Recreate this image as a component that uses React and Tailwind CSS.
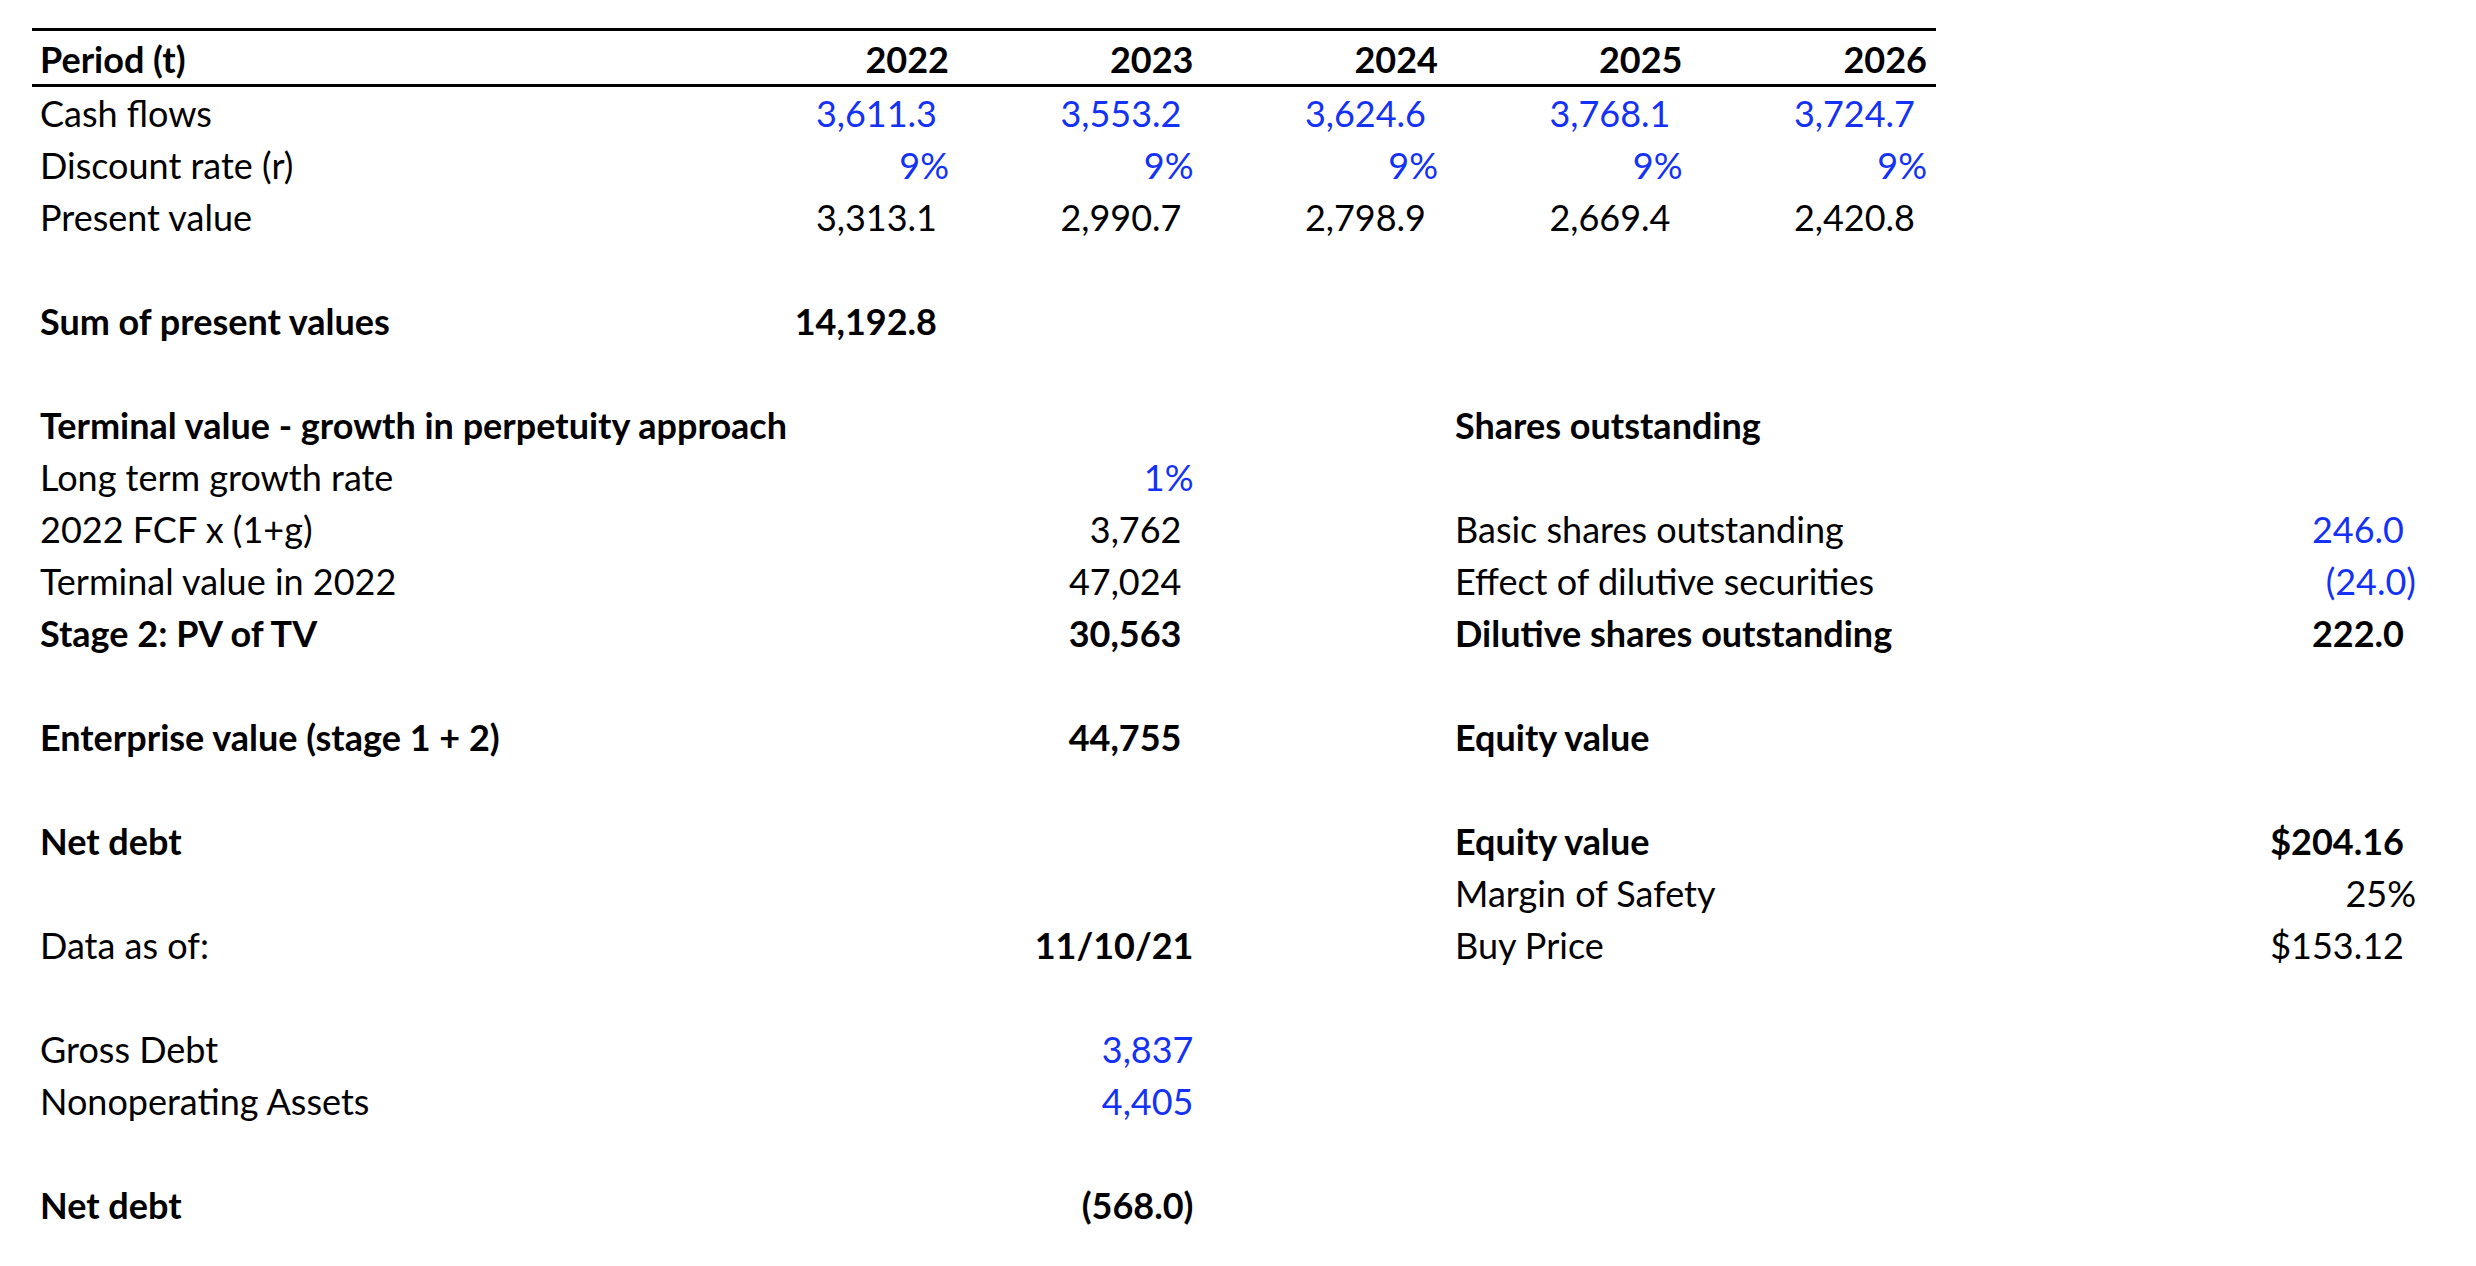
const BLUE = 'text-[#1432f5]';

// cell: [col (0..7), text, opts]  opts: b=bold, blue, pad=accounting pad for ")"
const rows = [
  [[0, 'Cash flows'], [1, '3,611.3', 'blue pad'], [2, '3,553.2', 'blue pad'], [3, '3,624.6', 'blue pad'], [4, '3,768.1', 'blue pad'], [5, '3,724.7', 'blue pad']],
  [[0, 'Discount rate (r)'], [1, '9%', 'blue'], [2, '9%', 'blue'], [3, '9%', 'blue'], [4, '9%', 'blue'], [5, '9%', 'blue']],
  [[0, 'Present value'], [1, '3,313.1', 'pad'], [2, '2,990.7', 'pad'], [3, '2,798.9', 'pad'], [4, '2,669.4', 'pad'], [5, '2,420.8', 'pad']],
  [],
  [[0, 'Sum of present values', 'b'], [1, '14,192.8', 'b pad']],
  [],
  [[0, 'Terminal value - growth in perpetuity approach', 'b'], [4, 'Shares outstanding', 'b']],
  [[0, 'Long term growth rate'], [2, '1%', 'blue']],
  [[0, '2022 FCF x (1+g)'], [2, '3,762', 'pad'], [4, 'Basic shares outstanding'], [7, '246.0', 'blue pad']],
  [[0, 'Terminal value in 2022'], [2, '47,024', 'pad'], [4, 'Effect of dilutive securities'], [7, '(24.0)', 'blue']],
  [[0, 'Stage 2: PV of TV', 'b'], [2, '30,563', 'b pad'], [4, 'Dilutive shares outstanding', 'b'], [7, '222.0', 'b pad']],
  [],
  [[0, 'Enterprise value (stage 1 + 2)', 'b'], [2, '44,755', 'b pad'], [4, 'Equity value', 'b']],
  [],
  [[0, 'Net debt', 'b'], [4, 'Equity value', 'b'], [7, '$204.16', 'b pad']],
  [[4, 'Margin of Safety'], [7, '25%']],
  [[0, 'Data as of:'], [2, '11/10/21', 'b'], [4, 'Buy Price'], [7, '$153.12', 'pad']],
  [],
  [[0, 'Gross Debt'], [2, '3,837', 'blue']],
  [[0, 'Nonoperating Assets'], [2, '4,405', 'blue']],
  [],
  [[0, 'Net debt', 'b'], [2, '(568.0)', 'b']],
];

const colStart = [
  'col-start-1',
  'col-start-2',
  'col-start-3',
  'col-start-4',
  'col-start-5',
  'col-start-6',
  'col-start-7',
  'col-start-8',
];

function Cell({ col, text, opts = '' }) {
  const flags = opts.split(' ');
  const bold = flags.includes('b');
  const blue = flags.includes('blue');
  const pad = flags.includes('pad');
  const isLabel = col === 0 || (col === 4 && !/^[\d$(]/.test(text));
  return (
    <div
      className={[
        colStart[col],
        'row-start-1 whitespace-nowrap leading-[36px] pt-[8px]',
        isLabel ? 'text-left pl-[8px]' : pad ? 'text-right pr-[21px]' : 'text-right pr-[9px]',
        isLabel && col === 4 ? 'col-span-4' : '',
        bold ? 'font-bold' : 'font-normal',
        blue ? BLUE : 'text-black',
      ].join(' ')}
    >
      {text}
    </div>
  );
}

export default function App() {
  const years = ['2022', '2023', '2024', '2025', '2026'];
  return (
    <div className="min-h-[1266px] w-[2476px] bg-white pt-[28px] pl-[32px] font-['Lato','Liberation_Sans',sans-serif] text-[36px] text-black">
      {/* header with heavy rules */}
      <div className="grid h-[59px] w-[1904px] grid-cols-[681.5px_repeat(5,244.5px)] border-y-[3px] border-black font-bold">
        <div className="pl-[8px] pt-[10px] leading-[36px]">Period (t)</div>
        {years.map((y) => (
          <div key={y} className="pr-[9px] pt-[10px] text-right leading-[36px]">
            {y}
          </div>
        ))}
      </div>

      {rows.map((r, i) => (
        <div key={i} className="grid h-[52px] w-[2393px] grid-cols-[681.5px_repeat(7,244.5px)]">
          {r.map(([col, text, opts], j) => (
            <Cell key={j} col={col} text={text} opts={opts} />
          ))}
        </div>
      ))}
    </div>
  );
}
